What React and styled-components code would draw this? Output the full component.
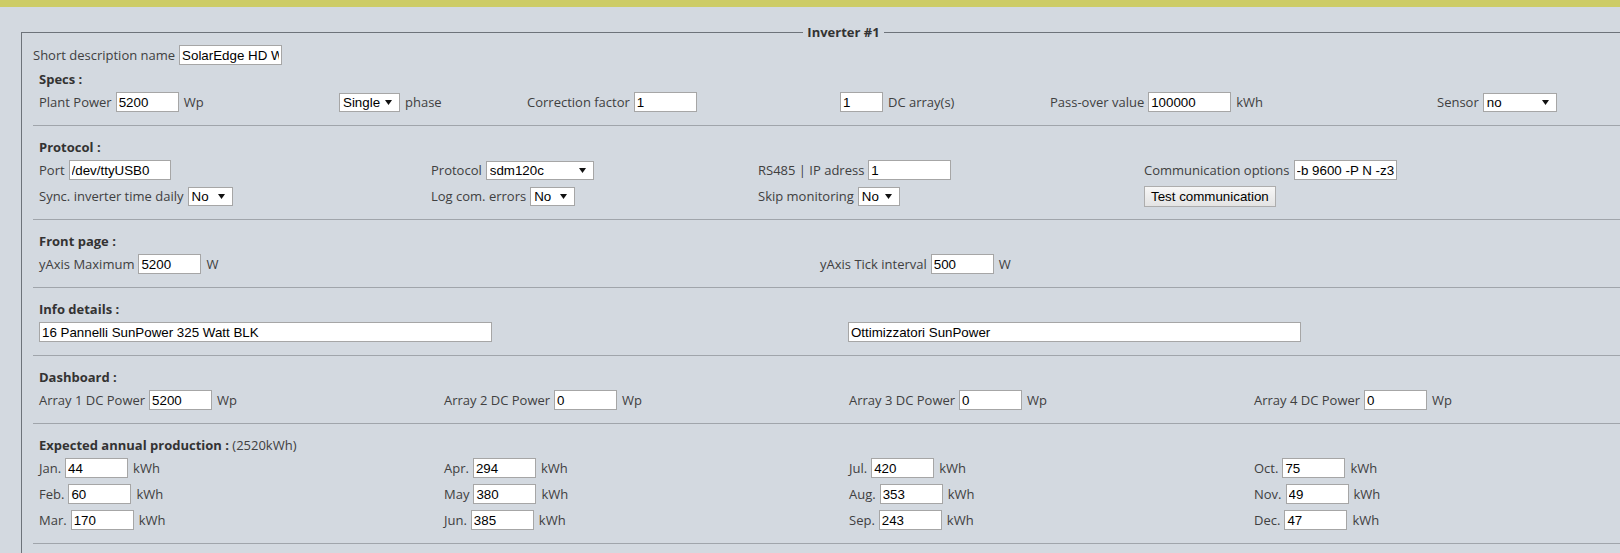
import React from 'react'
import styled, { createGlobalStyle } from 'styled-components'

const GlobalStyle = createGlobalStyle`
  html, body {
    margin: 0;
    padding: 0;
    overflow: hidden;
    background: #d3d9e0;
  }
  body {
    font-family: "Open Sans", "Noto Sans", sans-serif;
    font-size: 13px;
    color: #404040;
  }
`

const TopBar = styled.div`
  height: 7px;
  background: #cdcc66;
`

const Frame = styled.fieldset`
  box-sizing: border-box;
  width: 1645px;
  margin: 17px 0 0 21px;
  padding: 1px 11px 0;
  border: 1px solid #6d737a;
`

const Legend = styled.legend`
  margin: 0 auto;
  padding: 0 4px;
  line-height: 17px;
  font-weight: 700;
  color: #333;
`

const Section = styled.div`
  padding: ${p => (p.$first ? '2px 6px 10px' : '12px 6px 10px')};
  border-top: ${p => (p.$first ? 'none' : '1px solid #a0a5ab')};
  min-height: ${p => (p.$tail ? '80px' : 'auto')};
`

const Title = styled.div`
  height: 18px;
  margin-bottom: 1px;
  line-height: 18px;
  font-weight: 700;
  color: #333;

  span {
    font-weight: 400;
    color: #404040;
  }
`

const Row = styled.div`
  display: grid;
  grid-template-columns: ${p => p.$cols};
  grid-auto-rows: 26px;
  align-items: center;
`

const Cell = styled.div`
  display: flex;
  align-items: center;
  gap: 4px;
  white-space: nowrap;
  line-height: 18px;
`

const Unit = styled.span`
  margin-left: 1px;
`

const Field = styled.input`
  box-sizing: border-box;
  width: ${p => p.$w}px;
  height: 20px;
  margin: 0;
  padding: 1px 2px;
  border: 1px solid #a6a6a6;
  border-radius: 0;
  background: #fff;
  color: #000;
  font: 13.333px "Liberation Sans", Arial, sans-serif;
  outline: none;
`

const SelectWrap = styled.span`
  position: relative;
  display: inline-flex;
`

const SelectBox = styled.select`
  appearance: none;
  box-sizing: border-box;
  width: ${p => p.$w}px;
  height: 19px;
  margin: 0;
  padding: 0 0 0 3px;
  border: 1px solid #a6a6a6;
  border-radius: 0;
  background: #fff;
  color: #000;
  font: 13.333px "Liberation Sans", Arial, sans-serif;
  outline: none;
`

const Caret = styled.svg`
  position: absolute;
  right: 8px;
  top: 7px;
  pointer-events: none;
`

const Button = styled.button`
  height: 21px;
  margin: 0;
  padding: 0 6px;
  border: 1px solid #adadad;
  border-radius: 0;
  background: linear-gradient(#f7f7f7, #e3e3e3);
  color: #000;
  font: 13.333px "Liberation Sans", Arial, sans-serif;
`

const Select = ({ w, value, options }) => (
  <SelectWrap>
    <SelectBox $w={w} defaultValue={value}>
      {options.map(o => <option key={o}>{o}</option>)}
    </SelectBox>
    <Caret width="7" height="5" viewBox="0 0 7 5">
      <path d="M0 0h7L3.5 5z" fill="#111" />
    </Caret>
  </SelectWrap>
)

const months = [
  ['Jan.', 44], ['Apr.', 294], ['Jul.', 420], ['Oct.', 75],
  ['Feb.', 60], ['May', 380], ['Aug.', 353], ['Nov.', 49],
  ['Mar.', 170], ['Jun.', 385], ['Sep.', 243], ['Dec.', 47],
]

const FOUR = '405px 405px 405px 1fr'

const App = () => {
  return (
    <>
      <GlobalStyle />
      <TopBar />
      <Frame>
        <Legend align="center">Inverter #1</Legend>
        <Row $cols="auto 1fr">
          <Cell>Short description name <Field $w={103} defaultValue="SolarEdge HD Wave" /></Cell>
        </Row>

        <Section $first>
          <Title>Specs :</Title>
          <Row $cols="300px 188px 313px 210px 387px 1fr">
            <Cell>Plant Power <Field $w={63} defaultValue="5200" /><Unit>Wp</Unit></Cell>
            <Cell><Select w={61} value="Single" options={['Single', 'Three']} /><Unit>phase</Unit></Cell>
            <Cell>Correction factor <Field $w={63} defaultValue="1" /></Cell>
            <Cell><Field $w={43} defaultValue="1" /><Unit>DC array(s)</Unit></Cell>
            <Cell>Pass-over value <Field $w={83} defaultValue="100000" /><Unit>kWh</Unit></Cell>
            <Cell>Sensor <Select w={74} value="no" options={['no', 'yes']} /></Cell>
          </Row>
        </Section>

        <Section>
          <Title>Protocol :</Title>
          <Row $cols="392px 327px 386px 1fr">
            <Cell>Port <Field $w={102} defaultValue="/dev/ttyUSB0" /></Cell>
            <Cell>Protocol <Select w={108} value="sdm120c" options={['sdm120c', 'aurora', 'sma']} /></Cell>
            <Cell>RS485 | IP adress <Field $w={83} defaultValue="1" /></Cell>
            <Cell>Communication options <Field $w={103} defaultValue="-b 9600 -P N -z3" /></Cell>
            <Cell>Sync. inverter time daily <Select w={45} value="No" options={['No', 'Yes']} /></Cell>
            <Cell>Log com. errors <Select w={45} value="No" options={['No', 'Yes']} /></Cell>
            <Cell>Skip monitoring <Select w={42} value="No" options={['No', 'Yes']} /></Cell>
            <Cell><Button type="button">Test communication</Button></Cell>
          </Row>
        </Section>

        <Section>
          <Title>Front page :</Title>
          <Row $cols="781px 1fr">
            <Cell>yAxis Maximum <Field $w={63} defaultValue="5200" /><Unit>W</Unit></Cell>
            <Cell>yAxis Tick interval <Field $w={63} defaultValue="500" /><Unit>W</Unit></Cell>
          </Row>
        </Section>

        <Section>
          <Title>Info details :</Title>
          <Row $cols="809px 1fr">
            <Cell><Field $w={453} defaultValue="16 Pannelli SunPower 325 Watt BLK" /></Cell>
            <Cell><Field $w={453} defaultValue="Ottimizzatori SunPower" /></Cell>
          </Row>
        </Section>

        <Section>
          <Title>Dashboard :</Title>
          <Row $cols={FOUR}>
            {[['1', '5200'], ['2', '0'], ['3', '0'], ['4', '0']].map(([n, v]) => (
              <Cell key={n}>Array {n} DC Power <Field $w={63} defaultValue={v} /><Unit>Wp</Unit></Cell>
            ))}
          </Row>
        </Section>

        <Section>
          <Title>Expected annual production : <span>(2520kWh)</span></Title>
          <Row $cols={FOUR}>
            {months.map(([m, v]) => (
              <Cell key={m}>{m} <Field $w={63} defaultValue={v} /><Unit>kWh</Unit></Cell>
            ))}
          </Row>
        </Section>

        <Section $tail />
      </Frame>
    </>
  )
}

export default App
